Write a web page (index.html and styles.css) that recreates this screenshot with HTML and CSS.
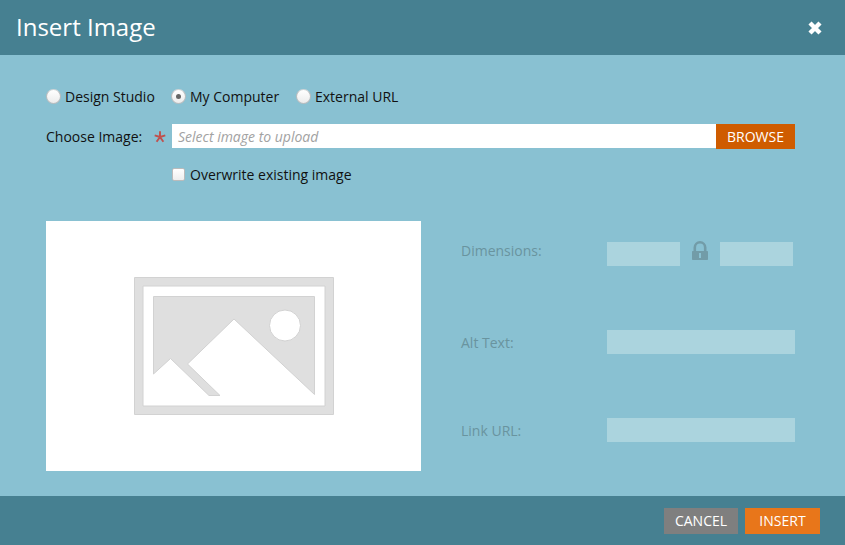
FILE: index.html
```html
<!DOCTYPE html>
<html lang="en">
<head>
<meta charset="utf-8">
<title>Insert Image</title>
<link rel="stylesheet" href="styles.css">
</head>
<body>
<div class="dialog">
  <header class="dialog-header">
    <h1>Insert Image</h1>
    <svg class="close" width="16" height="16" viewBox="0 0 16 16"><path d="M3 3 13 13M13 3 3 13"/></svg>
  </header>
  <main class="dialog-body">
    <div class="sources">
      <label class="source"><span class="radio"></span>Design Studio</label>
      <label class="source"><span class="radio checked"></span>My Computer</label>
      <label class="source"><span class="radio"></span>External URL</label>
    </div>
    <div class="choose">
      <span class="choose-label">Choose Image:</span>
      <svg class="required" width="12" height="12" viewBox="0 0 12 12"><path d="M6 6V.3M6 6 .7 4.4M6 6 11.3 4.4M6 6 2.6 10.8M6 6 9.4 10.8"/></svg>
      <div class="file">Select image to upload</div>
      <div class="browse">BROWSE</div>
    </div>
    <label class="overwrite"><span class="checkbox"></span>Overwrite existing image</label>
    <div class="details">
      <div class="preview">
        <svg width="200" height="138" viewBox="0 0 200 138">
          <path class="art" fill-rule="evenodd" d="M.5.5h199v137H.5zM9 9v120h182v-120z"/>
          <path class="art" fill-rule="evenodd" d="M19.5 19.5h161v98L100 42 53.5 87 86 118.500H75L36.500 81.500 19.500 97zM166.500 48.500a15.500 15.500 0 1 0-31 0a15.500 15.500 0 1 0 31 0z"/>
        </svg>
      </div>
      <div class="fields">
        <div class="field dimensions"><span class="name">Dimensions:</span><span class="box half"></span>
          <svg class="lock" width="16" height="20" viewBox="0 0 16 20"><path class="shackle" d="M2.800 10V6.500a5.200 5.200 0 0 1 10.400 0V10"/><path fill-rule="evenodd" d="M.8 10h14.400q.8 0 .8.8v7.400q0 .8-.8.8H.8q-.8 0-.8-.8v-7.400q0-.8.8-.8zM7 12v5h2v-5z"/></svg>
          <span class="box half"></span></div>
        <div class="field"><span class="name">Alt Text:</span><span class="box"></span></div>
        <div class="field"><span class="name">Link URL:</span><span class="box"></span></div>
      </div>
    </div>
  </main>
  <footer class="dialog-footer">
    <div class="button cancel">CANCEL</div>
    <div class="button insert">INSERT</div>
  </footer>
</div>
</body>
</html>
```
FILE: styles.css
```css
* { box-sizing: border-box; }
body {
  margin: 0;
  font: 14px/20px "Open Sans", sans-serif;
  color: #111;
}
svg { display: block; flex: none; }
.dialog {
  display: flex;
  flex-direction: column;
  width: 845px;
  height: 545px;
  background: #89c1d2;
}
.dialog-header {
  display: flex;
  align-items: center;
  justify-content: space-between;
  height: 55px;
  padding: 0 22px 0 16px;
  background: #468091;
}
h1 {
  margin: 0;
  padding-bottom: 2px;
  font-size: 24px;
  font-weight: 400;
  line-height: 53px;
  color: #fff;
}
.close { stroke: #fff; stroke-width: 4.4; }
.dialog-body { flex: 1; padding: 32px 50px 0 46px; }
.sources { display: flex; height: 20px; }
.source, .overwrite { display: flex; align-items: center; white-space: nowrap; }
.source { width: 125px; }
.radio {
  display: flex;
  align-items: center;
  justify-content: center;
  width: 15px;
  height: 15px;
  margin: 0 4px 1px 0;
  border: 1px solid #b9bdbf;
  border-top-color: #d2d5d6;
  border-radius: 50%;
  background: linear-gradient(#fff, #ececec);
}
.radio.checked::after {
  content: "";
  width: 5px;
  height: 5px;
  border-radius: 50%;
  background: #666;
}
.choose { display: flex; height: 25px; margin-top: 17px; line-height: 25px; }
.choose-label { width: 108px; }
.required { margin: 7px 6px 0 0; fill: none; stroke: #c0504d; stroke-width: 1.9; }
.file {
  width: 544px;
  height: 24px;
  padding-left: 6px;
  background: #fff;
  color: #a2a2a2;
  font-style: italic;
}
.browse { width: 79px; background: #cf5c00; color: #fff; text-align: center; }
.overwrite { height: 20px; margin: 16px 0 0 126px; }
.checkbox {
  width: 13px;
  height: 13px;
  margin: 0 5px 1px 0;
  border: 1px solid #bbb;
  border-radius: 2px;
  background: linear-gradient(#fff, #eee);
}
.details { display: flex; gap: 40px; margin-top: 36px; }
.preview {
  display: flex;
  justify-content: center;
  width: 375px;
  height: 250px;
  padding-top: 56px;
  background: #fff;
}
.art { fill: #dfdfdf; stroke: #d2d2d2; }
.fields {
  display: flex;
  flex-direction: column;
  gap: 64px;
  width: 334px;
  padding-top: 21px;
}
.field { display: flex; height: 24px; }
.name { width: 146px; line-height: 26px; color: #69949f; }
.box { width: 188px; height: 24px; background: #abd4de; }
.half { width: 73px; }
.dimensions .name { line-height: 18px; }
.lock { margin: -1px 12px 0; fill: #729ca8; }
.shackle { fill: none; stroke: #729ca8; stroke-width: 2.6; }
.dialog-footer {
  display: flex;
  gap: 7px;
  justify-content: flex-end;
  height: 49px;
  padding: 12px 25px 0 0;
  background: #468091;
}
.button { height: 26px; line-height: 26px; color: #fff; text-align: center; }
.cancel { width: 74px; background: #7f7f7f; }
.insert { width: 75px; background: #e8761a; }
```
